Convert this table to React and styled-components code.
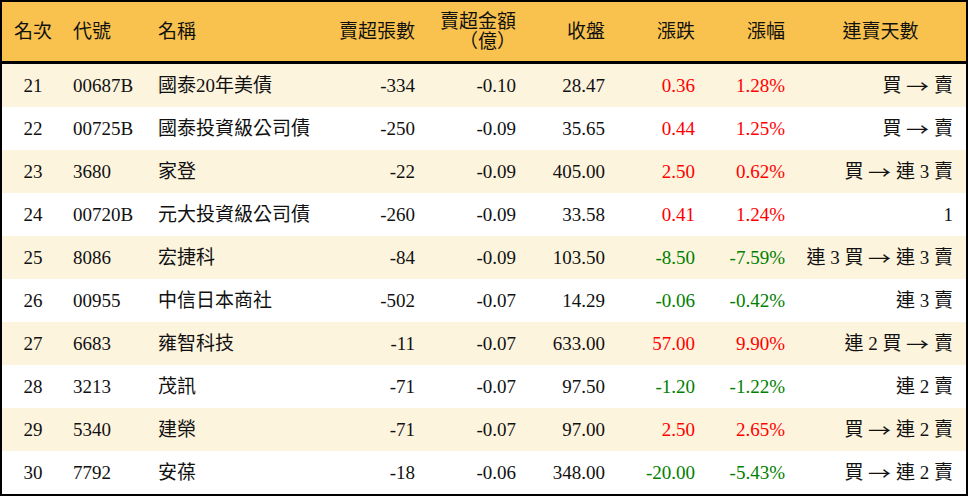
import React from "react";
import styled, { createGlobalStyle } from "styled-components";

const GlobalStyle = createGlobalStyle`
  html, body {
    margin: 0;
    padding: 0;
    background: #ffffff;
  }
  body {
    font-family: "Liberation Serif", "Noto Sans CJK TC", serif;
    color: #111111;
  }
`;

const COLS = "62px 85px 181px 95px 101px 89px 90px 90px 171px";

const Table = styled.div`
  width: 968px;
  height: 496px;
  box-sizing: border-box;
  border: 2px solid #000;
  display: flex;
  flex-direction: column;
`;

const HeadRow = styled.div`
  display: grid;
  grid-template-columns: ${COLS};
  height: 59px;
  background: #f9c24e;
  border-bottom: 3px solid #000;
`;

const Row = styled.div`
  display: grid;
  grid-template-columns: ${COLS};
  height: 43px;
  background: ${(p) => (p.$odd ? "#fdf4de" : "#ffffff")};
`;

const Cell = styled.div`
  display: flex;
  align-items: center;
  justify-content: ${(p) =>
    p.$align === "center" ? "center" : p.$align === "right" ? "flex-end" : "flex-start"};
  text-align: ${(p) => p.$align || "left"};
  padding: ${(p) => (p.$align === "left" ? "0 0 0 9px" : p.$align === "center" ? "0" : "0 10px 0 0")};
  padding-right: ${(p) => (p.$pr != null ? `${p.$pr}px` : undefined)};
  font-size: 19px;
  line-height: 20px;
  white-space: pre;
  color: ${(p) => (p.$tone === "up" ? "#ff0000" : p.$tone === "down" ? "#008000" : "#111111")};
`;

const HeadCell = styled(Cell)`
  white-space: normal;
`;

const Arrow = styled.span`
  font-family: "Noto Sans CJK TC", sans-serif;
  font-size: 17px;
  display: inline-block;
  transform: scaleX(1.35);
  margin: 0 3px;
`;

const heads = [
  { t: "名次", a: "center" },
  { t: "代號", a: "left" },
  { t: "名稱", a: "left" },
  { t: "賣超張數", a: "right" },
  { t: (<>賣超金額<br />（億）</>), a: "right" },
  { t: "收盤", a: "right" },
  { t: "漲跌", a: "right" },
  { t: "漲幅", a: "right" },
  { t: "連賣天數", a: "center" },
];

const rows = [
  ["21", "00687B", "國泰20年美債", "-334", "-0.10", "28.47", "0.36", "1.28%", "買 → 賣"],
  ["22", "00725B", "國泰投資級公司債", "-250", "-0.09", "35.65", "0.44", "1.25%", "買 → 賣"],
  ["23", "3680", "家登", "-22", "-0.09", "405.00", "2.50", "0.62%", "買 → 連 3 賣"],
  ["24", "00720B", "元大投資級公司債", "-260", "-0.09", "33.58", "0.41", "1.24%", "1"],
  ["25", "8086", "宏捷科", "-84", "-0.09", "103.50", "-8.50", "-7.59%", "連 3 買 → 連 3 賣"],
  ["26", "00955", "中信日本商社", "-502", "-0.07", "14.29", "-0.06", "-0.42%", "連 3 賣"],
  ["27", "6683", "雍智科技", "-11", "-0.07", "633.00", "57.00", "9.90%", "連 2 買 → 賣"],
  ["28", "3213", "茂訊", "-71", "-0.07", "97.50", "-1.20", "-1.22%", "連 2 賣"],
  ["29", "5340", "建榮", "-71", "-0.07", "97.00", "2.50", "2.65%", "買 → 連 2 賣"],
  ["30", "7792", "安葆", "-18", "-0.06", "348.00", "-20.00", "-5.43%", "買 → 連 2 賣"],
];

const aligns = ["center", "left", "left", "right", "right", "right", "right", "right", "right"];

// split streak text so the arrow can use a wider glyph
const renderStreak = (text) => {
  const parts = text.split("→");
  if (parts.length === 1) return text;
  return (
    <>
      {parts[0]}
      <Arrow>→</Arrow>
      {parts[1]}
    </>
  );
};

export default function App() {
  return (
    <>
      <GlobalStyle />
      <Table>
        <HeadRow>
          {heads.map((h, i) => (
            <HeadCell key={i} $align={h.a}>
              {h.t}
            </HeadCell>
          ))}
        </HeadRow>
        {rows.map((r, ri) => {
          const tone = r[6].startsWith("-") ? "down" : "up";
          return (
            <Row key={r[0]} $odd={ri % 2 === 0}>
              {r.map((v, ci) => (
                <Cell
                  key={ci}
                  $align={aligns[ci]}
                  $pr={ci === 8 ? 13 : null}
                  $tone={ci === 6 || ci === 7 ? tone : null}
                >
                  {ci === 8 ? renderStreak(v) : v}
                </Cell>
              ))}
            </Row>
          );
        })}
      </Table>
    </>
  );
}
